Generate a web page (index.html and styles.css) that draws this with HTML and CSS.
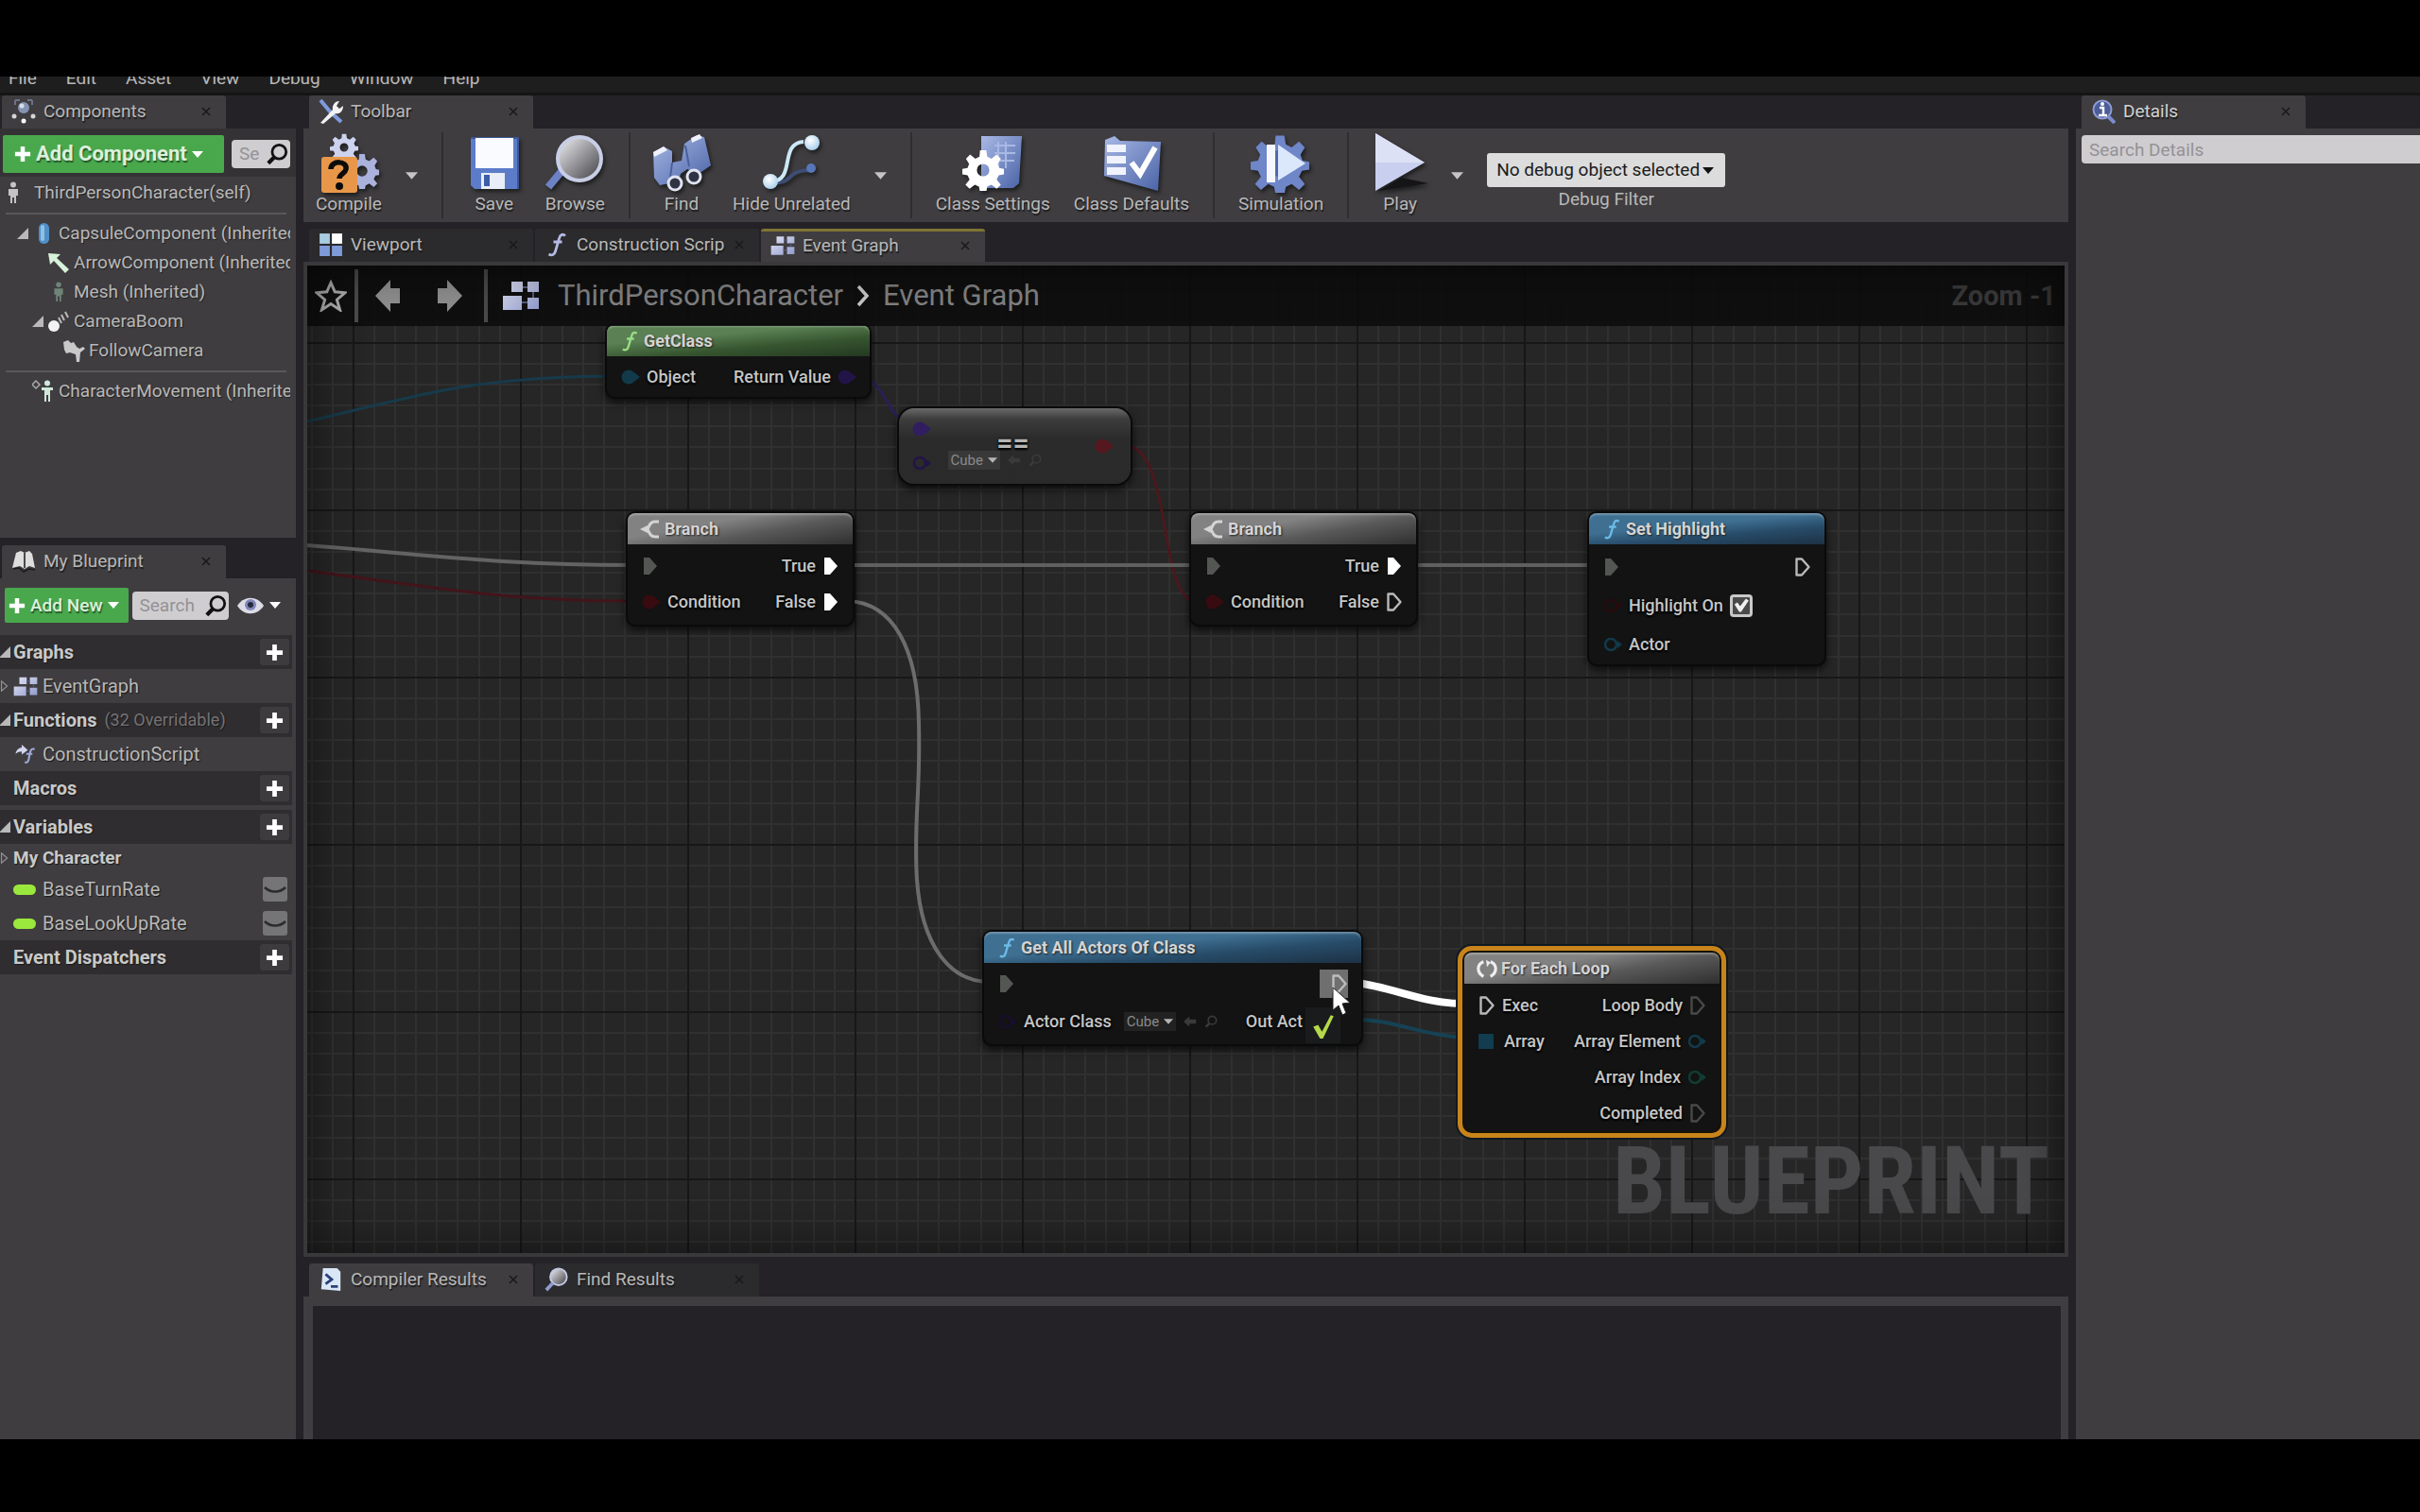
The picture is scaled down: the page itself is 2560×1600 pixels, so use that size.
FILE: index.html
```html
<!DOCTYPE html>
<html lang="en">
<head>
<meta charset="utf-8">
<title>ThirdPersonCharacter - Blueprint Editor</title>
<link rel="stylesheet" href="styles.css">
</head>
<body>
<svg class="defs" aria-hidden="true">
  <defs>
    <linearGradient id="lav" x1="0" y1="0" x2="1" y2="1"><stop offset="0" stop-color="#e4e6f7"/><stop offset="1" stop-color="#8f9acb"/></linearGradient>
    <linearGradient id="blu" x1="0" y1="0" x2="1" y2="1"><stop offset="0" stop-color="#a9b9e6"/><stop offset="1" stop-color="#4a63a6"/></linearGradient>
    <linearGradient id="glassfill" x1="0" y1="0" x2="1" y2="1"><stop offset="0" stop-color="#f4f4f6"/><stop offset=".55" stop-color="#8d8d92"/><stop offset="1" stop-color="#3d3d42"/></linearGradient>
    <radialGradient id="ball" cx=".4" cy=".35" r=".7"><stop offset="0" stop-color="#fff"/><stop offset="1" stop-color="#a5cdec"/></radialGradient>
    <symbol id="i-x" viewBox="0 0 10 10"><path d="M1 1l8 8M9 1L1 9" stroke="#19191a" stroke-width="1.600" fill="none"/></symbol>
    <symbol id="i-caret" viewBox="0 0 14 8"><path d="M0 0h14L7 8z" fill="currentColor"/></symbol>
    <symbol id="i-plus" viewBox="0 0 20 20"><path d="M7.500 1h5v6.500H19v5h-6.500V19h-5v-6.500H1v-5h6.500z" fill="#fff"/></symbol>
    <symbol id="i-open" viewBox="0 0 12 12"><path d="M12 0v12H0z" fill="#b9b9b9"/></symbol>
    <symbol id="i-closed" viewBox="0 0 12 14"><path d="M2 1l7 6-7 6z" fill="none" stroke="#8e8e8e" stroke-width="1.500"/></symbol>
    <symbol id="i-mag" viewBox="0 0 26 26"><circle cx="15.500" cy="10.500" r="8" fill="none" stroke="currentColor" stroke-width="3"/><path d="M10 16.500L3 23.500" stroke="currentColor" stroke-width="4.500"/></symbol>
    <symbol id="i-cells" viewBox="0 0 40 32"><path d="M10 1h12v11H10zM27 1h12v11H27zM27 18h12v12H27zM1 16h20v15H1z" fill="url(#lav)"/><path d="M22 7h5M33 12v6M21 23h6" stroke="#55597a" stroke-width="2"/></symbol>
    <symbol id="i-view" viewBox="0 0 24 24"><path d="M1 1h10v10H1z" fill="#a9cde0"/><path d="M13 1h10v10H13z" fill="#fff"/><path d="M1 13h10v10H1zM13 13h10v10H13z" fill="#7f9ad8"/></symbol>
    <symbol id="i-f" viewBox="0 0 20 26"><path d="M19 3.500C16 1 13.500 2.500 12.500 6.500L8.500 20C7.500 23.500 5 25 1.500 23M6.500 10h9" fill="none" stroke="currentColor" stroke-width="2.800"/></symbol>
    <symbol id="i-gear" viewBox="0 0 40 40"><path fill-rule="evenodd" d="M17 1h6l1 6 4 2 5-4 4 4-3 5 1.500 4L41 19v5l-6 1-2 4 4 5-4 4-5-4-4 2-1 5h-6l-1-5-4-2-5 4-4-4 4-5-2-4-6-1v-5l6-1 1.500-4-3-5 4-4 5 4 4-2zM20 14a6 6 0 100 12 6 6 0 000-12z"/></symbol>
    <symbol id="i-find" viewBox="0 0 28 28"><circle cx="16" cy="11" r="9.500" fill="url(#glassfill)" stroke="#c3c9e6" stroke-width="2"/><path d="M9.500 18L2 26" stroke="#8e9bd0" stroke-width="4"/></symbol>
    <symbol id="i-exec" viewBox="0 0 18 22"><path d="M2 2h6l8 9-8 9H2z" fill="currentColor"/></symbol>
    <symbol id="i-execo" viewBox="0 0 18 22"><path d="M2.500 2.500H8l7.500 8.500L8 19.500H2.500z" fill="none" stroke="currentColor" stroke-width="2.400" stroke-linejoin="round"/></symbol>
    <symbol id="i-pin" viewBox="0 0 20 18"><circle cx="8" cy="9" r="7.500" fill="currentColor"/><path d="M14 4l6 5-6 5z" fill="currentColor"/></symbol>
    <symbol id="i-pino" viewBox="0 0 20 18"><circle cx="8" cy="9" r="6" fill="none" stroke="currentColor" stroke-width="2.500"/><path d="M15 5l5 4-5 4z" fill="currentColor"/></symbol>
    <symbol id="i-branch" viewBox="0 0 22 22"><path d="M20 3h-4C11 3 10 7 8 11c2 4 3 8 8 8h4" fill="none" stroke="#d4d4d4" stroke-width="3"/><path d="M0 11l8-4v8z" fill="#d4d4d4"/></symbol>
    <symbol id="i-assign" viewBox="0 0 18 16"><path d="M0 8l8-7v4h9v6H8v4z" fill="currentColor"/></symbol>
    <symbol id="i-person" viewBox="0 0 14 24"><circle cx="7" cy="3.500" r="3" fill="currentColor"/><path d="M2 8h10v7h-2v8H8v-6H6v6H4v-8H2z" fill="currentColor"/></symbol>
  </defs>
</svg>

<div class="app">
  <nav class="menu">
    <a href="#">File</a><a href="#">Edit</a><a href="#">Asset</a><a href="#">View</a><a href="#">Debug</a><a href="#">Window</a><a href="#">Help</a>
  </nav>

  <div class="work">
    <aside class="col">
      <section class="dock dock-components">
        <div class="tabs">
          <div class="tab tab-active">
            <svg class="tab-icon" viewBox="0 0 26 26"><circle cx="13" cy="9" r="6" fill="#8593b3"/><circle cx="11" cy="7" r="2.500" fill="#d6ddeb"/><path d="M4 1h5M4 1v5M22 1h-5M22 1v5" stroke="#6d7387" stroke-width="2"/><circle cx="3" cy="18" r="2.500" fill="#d5d5d5"/><circle cx="13" cy="23" r="2.500" fill="#fff"/><circle cx="23" cy="18" r="2.500" fill="#d5d5d5"/></svg>
            <button class="tab-name">Components</button>
            <button class="tab-close" aria-label="Close"><svg><use href="#i-x"/></svg></button>
          </div>
        </div>
        <div class="panel panel-components">
          <div class="bar bar-components">
            <button class="green green-lg"><svg class="plus"><use href="#i-plus"/></svg>Add Component<svg class="caret"><use href="#i-caret"/></svg></button>
            <label class="search search-sm"><input type="text" placeholder="Search" aria-label="Search components"><svg class="mag"><use href="#i-mag"/></svg></label>
          </div>
          <div class="row self"><svg class="ic ic-grey"><use href="#i-person"/></svg><span>ThirdPersonCharacter(self)</span></div>
          <hr>
          <div class="row l1"><svg class="exp"><use href="#i-open"/></svg><svg class="ic" viewBox="0 0 24 24"><rect x="7" y="1" width="11" height="22" rx="5.500" fill="#4f8fc6"/><rect x="9" y="3" width="4" height="17" rx="2" fill="#8fc0e4"/></svg><span>CapsuleComponent (Inherited)</span></div>
          <div class="row l2"><i class="exp"></i><svg class="ic" viewBox="0 0 24 24"><path d="M1 2l13 1-4 4 13 12-4 4L7 10l-4 4z" fill="#d7f2d8"/></svg><span>ArrowComponent (Inherited)</span></div>
          <div class="row l2"><i class="exp"></i><svg class="ic ic-mesh"><use href="#i-person"/></svg><span>Mesh (Inherited)</span></div>
          <div class="row l2"><svg class="exp"><use href="#i-open"/></svg><svg class="ic" viewBox="0 0 24 24"><circle cx="7" cy="17" r="6" fill="#f2f2f2"/><path d="M12 8l3 6M15 5l3 6M19 2l3 6" stroke="#b9b9b9" stroke-width="2"/></svg><span>CameraBoom</span></div>
          <div class="row l3"><i class="exp"></i><svg class="ic" viewBox="0 0 24 24"><path d="M1 3l5-2 3 3 3-1 3 5 3 2 4-2 2 2-5 4-1 10h-3l-1-8-6-2-4 1-2-4z" fill="#c9c9c9"/></svg><span>FollowCamera</span></div>
          <hr>
          <div class="row l1"><i class="exp"></i><svg class="ic" viewBox="0 0 24 24"><path d="M4 1l4 4-4 4-4-4z" fill="none" stroke="#aaa" stroke-width="1.500"/><circle cx="16" cy="3.500" r="3" fill="#cfe8da"/><path d="M10 8h12v3h-3v12h-2v-7h-2v7h-2V11h-3z" fill="#cfe8da"/></svg><span>CharacterMovement (Inherited)</span></div>
        </div>
      </section>

      <section class="dock dock-blueprint">
        <div class="tabs">
          <div class="tab tab-active">
            <svg class="tab-icon" viewBox="0 0 26 26"><path d="M1 20L5 4l5-2 4 2 5-2 3 3 3 15-6-2-5 3-5-3z" fill="#dedede"/><path d="M14 4v16M2 21l6-1 5 4 6-3 6 1" stroke="#1b1b1b" stroke-width="1.500" fill="none"/></svg>
            <button class="tab-name">My Blueprint</button>
            <button class="tab-close" aria-label="Close"><svg><use href="#i-x"/></svg></button>
          </div>
        </div>
        <div class="panel">
          <div class="bar bar-blueprint">
            <button class="green"><svg class="plus"><use href="#i-plus"/></svg>Add New<svg class="caret"><use href="#i-caret"/></svg></button>
            <label class="search"><input type="text" placeholder="Search" aria-label="Search blueprint"><svg class="mag"><use href="#i-mag"/></svg></label>
            <button class="eye" aria-label="View options"><svg class="eye-icon" viewBox="0 0 28 20"><path d="M0 10C7-1 21-1 28 10 21 21 7 21 0 10z" fill="#dcdce6"/><circle cx="14" cy="9" r="6" fill="#8085b8"/><circle cx="14" cy="9" r="3" fill="#26283c"/></svg><svg class="caret"><use href="#i-caret"/></svg></button>
          </div>
          <div class="cat"><svg class="exp"><use href="#i-open"/></svg><h2>Graphs</h2><button class="add" aria-label="Add graph"><svg><use href="#i-plus"/></svg></button></div>
          <div class="item"><svg class="exp"><use href="#i-closed"/></svg><svg class="item-icon"><use href="#i-cells"/></svg><span>EventGraph</span></div>
          <div class="cat"><svg class="exp"><use href="#i-open"/></svg><h2>Functions</h2><small>(32 Overridable)</small><button class="add" aria-label="Add function"><svg><use href="#i-plus"/></svg></button></div>
          <div class="item"><i class="exp"></i><svg class="item-icon" viewBox="0 0 26 26"><path d="M0 12C1 6 5 4 8 4V0l8 7-8 6V9C5 9 3 10 0 12z" fill="#d3d6ec"/><path d="M25 6c-3-1-5 0-6 4l-2 10c-1 3-2 4-5 3M14 12h8" stroke="#9fa9da" stroke-width="2.600" fill="none"/></svg><span>ConstructionScript</span></div>
          <div class="cat"><i class="exp"></i><h2>Macros</h2><button class="add" aria-label="Add macro"><svg><use href="#i-plus"/></svg></button></div>
          <div class="cat cat-gap"><svg class="exp"><use href="#i-open"/></svg><h2>Variables</h2><button class="add" aria-label="Add variable"><svg><use href="#i-plus"/></svg></button></div>
          <div class="item item-group"><svg class="exp"><use href="#i-closed"/></svg><h3>My Character</h3></div>
          <div class="item"><i class="exp"></i><i class="pill"></i><span>BaseTurnRate</span><button class="lid" aria-label="Toggle visibility"><svg viewBox="0 0 26 26"><path d="M2 11c6 6 16 6 22 0" fill="none" stroke="#2c2c2c" stroke-width="2.500"/></svg></button></div>
          <div class="item"><i class="exp"></i><i class="pill"></i><span>BaseLookUpRate</span><button class="lid" aria-label="Toggle visibility"><svg viewBox="0 0 26 26"><path d="M2 11c6 6 16 6 22 0" fill="none" stroke="#2c2c2c" stroke-width="2.500"/></svg></button></div>
          <div class="cat"><i class="exp"></i><h2>Event Dispatchers</h2><button class="add" aria-label="Add dispatcher"><svg><use href="#i-plus"/></svg></button></div>
        </div>
      </section>
    </aside>

    <main class="col col-main">
      <section class="dock">
        <div class="tabs">
          <div class="tab tab-active">
            <svg class="tab-icon" viewBox="0 0 26 26"><path d="M2 1l10 12 12 11" stroke="#7e9ade" stroke-width="4" fill="none"/><path d="M2 25L15 11c-1-4 2-9 7-9l-3 5 3 3 4-3c0 6-4 9-8 8L5 26z" fill="#f3f3f3"/></svg>
            <button class="tab-name">Toolbar</button>
            <button class="tab-close" aria-label="Close"><svg><use href="#i-x"/></svg></button>
          </div>
        </div>
        <div class="panel toolbar">
          <button class="tool"><svg viewBox="0 0 64 64"><use href="#i-gear" x="12" y="1" width="30" height="30" fill="#cdd2ee"/><use href="#i-gear" x="27" y="22" width="38" height="38" fill="#aab2dc"/><rect x="3" y="26" width="38" height="38" rx="3" fill="#e8974a"/><path d="M13 39c0-10 18-9 16 0-1 5-7 5-7 10" fill="none" stroke="#0b0b0b" stroke-width="5.500"/><circle cx="22" cy="57" r="4" fill="#0b0b0b"/></svg>Compile</button>
          <button class="drop" aria-label="Compile options"><svg><use href="#i-caret"/></svg></button>
          <i class="sep"></i>
          <button class="tool"><svg viewBox="0 0 64 64"><path d="M7 6h50v54H11l-4-4z" fill="#5c7cc9"/><path d="M7 6h50v54" fill="none" stroke="#3b5694" stroke-width="2"/><path d="M12 6h40v32H12z" fill="#fafbff"/><path d="M18 43h25v17H18z" fill="#e9edf8"/><path d="M21 45h6v12h-6z" fill="#3d5da8"/></svg>Save</button>
          <button class="tool"><svg viewBox="0 0 64 64"><path d="M19 40L4 58" stroke="#6d82c4" stroke-width="8"/><circle cx="37" cy="28" r="23" fill="url(#glassfill)" stroke="#c8cee6" stroke-width="4"/></svg>Browse</button>
          <i class="sep"></i>
          <button class="tool"><svg viewBox="0 0 64 64"><path d="M2 21l11-6 9 5v12l10-2 3-18L48 3l8 2 7 30-13 9-12-5-7 5-2 8-20 4-6-8z" fill="url(#blu)"/><path d="M2 21l11-6 4 4-14 7zM42 6l9-4 3 4-11 5z" fill="#f0f2fb"/><path d="M22 32l-2 16M36 14l4 22" stroke="#49609f" stroke-width="2"/><circle cx="25" cy="54" r="7" fill="#2f3344" stroke="#dfe3f2" stroke-width="3"/><circle cx="45" cy="47" r="7" fill="#2f3344" stroke="#dfe3f2" stroke-width="3"/></svg>Find</button>
          <button class="tool"><svg viewBox="0 0 64 64"><path d="M14 53c20 2 12-13 38-13" fill="none" stroke="#3d4d74" stroke-width="4"/><circle cx="53" cy="38" r="5" fill="#5875b8"/><path d="M10 52c28 0 8-40 35-42" fill="none" stroke="#cbe8f6" stroke-width="4"/><circle cx="10" cy="52" r="8" fill="url(#ball)"/><circle cx="54" cy="11" r="8" fill="url(#ball)"/></svg>Hide Unrelated</button>
          <button class="drop" aria-label="Hide options"><svg><use href="#i-caret"/></svg></button>
          <i class="sep"></i>
          <button class="tool"><svg viewBox="0 0 64 64"><path d="M20 4h43l-3 50-6 5H20z" fill="url(#blu)"/><path d="M34 14h22M34 22h22M34 30h21M38 10v28M46 10v28" stroke="#a9b9e4" stroke-width="2"/><use href="#i-gear" x="0" y="18" width="44" height="44" fill="#fff"/></svg>Class Settings</button>
          <button class="tool"><svg viewBox="0 0 64 64"><path d="M4 8l10-4 6 5 43 1-3 52L3 46z" fill="url(#blu)"/><path d="M6 13h20v8H6zM6 25h20v8H6zM6 37h20v8H6z" fill="#f1f3fc"/><path d="M32 32l9 12 16-28" fill="none" stroke="#fff" stroke-width="6"/></svg>Class Defaults</button>
          <i class="sep"></i>
          <button class="tool"><svg viewBox="0 0 64 64"><use href="#i-gear" x="0" y="2" width="62" height="62" fill="#6f86c8"/><circle cx="31" cy="33" r="14" fill="#5068ac"/><path d="M17 13h9v40h-9z" fill="#f5f7ff"/><path d="M29 13l29 20-29 18z" fill="#dbe7fb"/></svg>Simulation</button>
          <i class="sep"></i>
          <button class="tool"><svg viewBox="0 0 64 64"><path d="M10 62l24-14 28 6z" fill="#151517"/><path d="M6 1l52 31L6 62z" fill="#c9cfee"/><path d="M6 1l52 31H6z" fill="#dde1f6"/></svg>Play</button>
          <button class="drop" aria-label="Play options"><svg><use href="#i-caret"/></svg></button>
          <div class="debug">
            <div class="combo"><select id="dbg"><option>No debug object selected</option></select><svg class="caret"><use href="#i-caret"/></svg></div>
            <label for="dbg">Debug Filter</label>
          </div>
        </div>
      </section>

      <section class="dock dock-graph">
        <div class="tabs">
          <div class="tab"><svg class="tab-icon"><use href="#i-view"/></svg><button class="tab-name">Viewport</button><button class="tab-close" aria-label="Close"><svg><use href="#i-x"/></svg></button></div>
          <div class="tab"><svg class="tab-icon lavender"><use href="#i-f"/></svg><button class="tab-name">Construction Scrip</button><button class="tab-close" aria-label="Close"><svg><use href="#i-x"/></svg></button></div>
          <div class="tab tab-active tab-focus"><svg class="tab-icon"><use href="#i-cells"/></svg><button class="tab-name">Event Graph</button><button class="tab-close" aria-label="Close"><svg><use href="#i-x"/></svg></button></div>
        </div>
        <div class="graph">
          <svg class="wires" aria-hidden="true">
            <g fill="none">
              <path d="M0 165C110 140 170 117 330 117" stroke="#173a4a" stroke-width="3"/>
              <path d="M0 296C120 305 200 317 345 317" stroke="#636363" stroke-width="4"/>
              <path d="M0 323C120 338 200 355 345 355" stroke="#43141a" stroke-width="3"/>
              <path d="M590 119C608 124 612 150 630 166" stroke="#2c1f55" stroke-width="3"/>
              <path d="M868 190C915 200 900 345 938 356" stroke="#4c181d" stroke-width="3"/>
              <path d="M570 317H940M1165 317H1362" stroke="#606060" stroke-width="4"/>
              <path d="M572 355C620 357 646 405 647 485C649 560 641 590 645 650C650 720 680 757 720 758" stroke="#6c6c6c" stroke-width="4"/>
              <path d="M1110 759C1150 764 1180 781 1224 781" stroke="#fff" stroke-width="8"/>
              <path d="M1110 798C1150 798 1180 815 1224 817" stroke="#164254" stroke-width="4"/>
            </g>
          </svg>

          <article class="node n-getclass">
            <header class="head-green"><svg class="fn"><use href="#i-f"/></svg>GetClass</header>
            <div class="ports">
              <div class="port"><svg class="pin c-obj"><use href="#i-pin"/></svg><span>Object</span><span class="out">Return Value</span><svg class="pin c-class"><use href="#i-pin"/></svg></div>
            </div>
          </article>

          <article class="node n-equal">
            <div class="eq-pins"><svg class="pin c-class2"><use href="#i-pin"/></svg><svg class="pin c-class"><use href="#i-pino"/></svg></div>
            <div class="eq-mid"><b>==</b><div class="pick"><button>Cube<svg><use href="#i-caret"/></svg></button><svg class="mini"><use href="#i-assign"/></svg><svg class="mini"><use href="#i-mag"/></svg></div></div>
            <svg class="pin c-bool2"><use href="#i-pin"/></svg>
          </article>

          <article class="node n-branch1">
            <header class="head-grey"><svg class="fn"><use href="#i-branch"/></svg>Branch</header>
            <div class="ports ports-38">
              <div class="port"><svg class="pin exec c-dim"><use href="#i-exec"/></svg><span class="out">True</span><svg class="pin exec"><use href="#i-exec"/></svg></div>
              <div class="port"><svg class="pin c-bool"><use href="#i-pin"/></svg><span>Condition</span><span class="out">False</span><svg class="pin exec"><use href="#i-exec"/></svg></div>
            </div>
          </article>

          <article class="node n-branch2">
            <header class="head-grey"><svg class="fn"><use href="#i-branch"/></svg>Branch</header>
            <div class="ports ports-38">
              <div class="port"><svg class="pin exec c-dim"><use href="#i-exec"/></svg><span class="out">True</span><svg class="pin exec"><use href="#i-exec"/></svg></div>
              <div class="port"><svg class="pin c-bool"><use href="#i-pin"/></svg><span>Condition</span><span class="out">False</span><svg class="pin exec c-open"><use href="#i-execo"/></svg></div>
            </div>
          </article>

          <article class="node n-highlight">
            <header class="head-blue"><svg class="fn"><use href="#i-f"/></svg>Set Highlight</header>
            <div class="ports">
              <div class="port"><svg class="pin exec c-dim"><use href="#i-exec"/></svg><span class="out"></span><svg class="pin exec c-open"><use href="#i-execo"/></svg></div>
              <div class="port"><svg class="pin c-faint"><use href="#i-pino"/></svg><label for="hl">Highlight On</label><input type="checkbox" id="hl" checked></div>
              <div class="port"><svg class="pin c-obj"><use href="#i-pino"/></svg><span>Actor</span></div>
            </div>
          </article>

          <article class="node n-getall">
            <header class="head-blue"><svg class="fn"><use href="#i-f"/></svg>Get All Actors Of Class</header>
            <div class="ports">
              <div class="port"><svg class="pin exec c-dim"><use href="#i-exec"/></svg><span class="out"></span><span class="hover-pin"><svg class="pin exec"><use href="#i-execo"/></svg></span></div>
              <div class="port"><svg class="pin c-class3"><use href="#i-pino"/></svg><span>Actor Class</span><div class="pick"><button>Cube<svg><use href="#i-caret"/></svg></button><svg class="mini"><use href="#i-assign"/></svg><svg class="mini"><use href="#i-mag"/></svg></div><span class="out out-cut">Out Act</span></div>
            </div>
          </article>

          <article class="node n-foreach">
            <header class="head-grey"><svg class="fn" viewBox="0 0 24 22"><path d="M8 3C0 6 0 16 8 20M16 3c8 3 8 13 0 17" fill="none" stroke="#eee" stroke-width="3.500"/><path d="M11 1l5 3-4 5z" fill="#eee"/></svg>For Each Loop</header>
            <div class="ports ports-38">
              <div class="port"><svg class="pin exec c-open"><use href="#i-execo"/></svg><span>Exec</span><span class="out">Loop Body</span><svg class="pin exec c-shut"><use href="#i-execo"/></svg></div>
              <div class="port"><svg class="pin c-arr" viewBox="0 0 20 18"><rect x="0" y="1" width="16" height="16" fill="currentColor"/></svg><span>Array</span><span class="out">Array Element</span><svg class="pin c-obj"><use href="#i-pino"/></svg></div>
              <div class="port"><span class="out">Array Index</span><svg class="pin c-int"><use href="#i-pino"/></svg></div>
              <div class="port"><span class="out">Completed</span><svg class="pin exec c-shut"><use href="#i-execo"/></svg></div>
            </div>
          </article>

          <span class="ok"><svg viewBox="0 0 36 38"><path d="M8 20l5-2 4 7L26 8l3 1-11 23h-3z" fill="#b4d84a"/></svg></span>
          <svg class="cursor" viewBox="0 0 20 32"><path d="M1 1v24l6-5 4 10 4-2-4-10 8-1z" fill="#fff" stroke="#222" stroke-width="1"/></svg>

          <div class="crumbs">
            <button class="icon-btn star" aria-label="Bookmark"><svg viewBox="0 0 32 32"><path d="M16 3l4 9 10 1-8 7 3 10-9-6-9 6 3-10-8-7 10-1z" fill="none" stroke="#aeaeae" stroke-width="2.800"/></svg></button>
            <i class="bar-sep"></i>
            <button class="icon-btn" aria-label="Back"><svg viewBox="0 0 28 36"><path d="M1 18L17 1v9h10v16H17v9z" fill="#8f8f8f"/></svg></button>
            <button class="icon-btn fwd" aria-label="Forward"><svg viewBox="0 0 28 36"><path d="M27 18L11 1v9H1v16h10v9z" fill="#8f8f8f"/></svg></button>
            <i class="bar-sep"></i>
            <svg class="crumb-icon"><use href="#i-cells"/></svg>
            <a href="#">ThirdPersonCharacter</a>
            <svg class="chev" viewBox="0 0 14 24"><path d="M2 2l9 10-9 10" fill="none" stroke="#c9c9c9" stroke-width="3.500"/></svg>
            <a href="#">Event Graph</a>
            <span class="zoom">Zoom -1</span>
          </div>
          <div class="mark">BLUEPRINT</div>
        </div>
      </section>

      <section class="dock dock-results">
        <div class="tabs">
          <div class="tab tab-active"><svg class="tab-icon" viewBox="0 0 26 28"><path d="M4 1h16l4 4v22L2 25z" fill="#d9e6f6"/><path d="M7 8l7 6-7 5M13 22h8" stroke="#2b3f78" stroke-width="3" fill="none"/></svg><button class="tab-name">Compiler Results</button><button class="tab-close" aria-label="Close"><svg><use href="#i-x"/></svg></button></div>
          <div class="tab"><svg class="tab-icon"><use href="#i-find"/></svg><button class="tab-name">Find Results</button><button class="tab-close" aria-label="Close"><svg><use href="#i-x"/></svg></button></div>
        </div>
        <div class="panel results"><div class="log"></div></div>
      </section>
    </main>

    <aside class="col">
      <section class="dock dock-details">
        <div class="tabs">
          <div class="tab tab-active tab-lit"><svg class="tab-icon" viewBox="0 0 26 26"><circle cx="12" cy="11" r="9.500" fill="#4b5c96" stroke="#8d9bd4" stroke-width="2"/><path d="M18 18l7 7" stroke="#7b8cd0" stroke-width="4"/><path d="M9 9h4v8M8 17h9" stroke="#fff" stroke-width="2.500" fill="none"/><circle cx="12" cy="5" r="2" fill="#fff"/></svg><button class="tab-name">Details</button><button class="tab-close" aria-label="Close"><svg><use href="#i-x"/></svg></button></div>
        </div>
        <div class="panel panel-details"><input class="details-search" type="text" placeholder="Search Details" aria-label="Search Details"></div>
      </section>
    </aside>
  </div>
</div>
</body>
</html>
```
FILE: styles.css
```css
* { box-sizing: border-box; }

body {
  margin: 0;
  background: #000;
  color: #b8b8b8;
  font: 19px/24px Roboto, "Liberation Sans", sans-serif;
}

button, input, select { font: inherit; color: inherit; }
button { padding: 0; border: 0; background: none; text-align: left; }
a { color: inherit; text-decoration: none; }
h2, h3 { margin: 0; font-size: 20px; font-weight: 700; }
h3 { font-size: 19px; }
.defs { position: absolute; width: 0; height: 0; }
svg { display: block; flex: none; }

/* Frame */
.app {
  display: flex;
  flex-direction: column;
  min-height: 100vh;
  padding: 81px 0 77px;
}
.menu {
  display: flex;
  align-items: flex-end;
  gap: 31px;
  height: 20px;
  padding: 0 9px 3px;
  overflow: hidden;
  background: #1e1e1f;
  border-bottom: 3px solid #151515;
}
.work {
  flex: 1;
  display: grid;
  grid-template-columns: 313px minmax(0, 1fr) 364px;
  gap: 8px;
  background: #242227;
}
.col { display: flex; flex-direction: column; gap: 8px; min-width: 0; }
.col-main { gap: 7px; }
.dock { display: flex; flex-direction: column; min-width: 0; }
.dock-components { flex: 468 1 0; }
.dock-blueprint { flex: 946 1 0; }
.dock-graph { flex: 1088 1 0; }
.dock-results { flex: 186 1 0; }
.dock-details { flex: 1; }
.panel { flex: 1; background: #3f3d40; }

/* Tabs */
.tabs { display: flex; gap: 2px; padding-left: 6px; }
.col:first-child .tabs { padding-left: 2px; }
.tab {
  display: flex;
  align-items: center;
  width: 237px;
  height: 35px;
  padding: 0 16px 2px 10px;
  background: #2b2a2c;
  border-radius: 3px 3px 0 0;
}
.tab-active { background: #3f3d40; }
.tab-focus { border-top: 3px solid #7e7434; }
.tab-lit { color: #d2d2d2; }
.tab-icon { width: 26px; height: 26px; margin-right: 8px; }
.tab-name { flex: 1; overflow: hidden; white-space: nowrap; text-shadow: 1px 2px 1px #1c1c1c; }
.tab-close { margin-left: 8px; }
.tab-close svg { width: 10px; height: 10px; }
.lavender { color: #b4bae4; }

/* Side panels */
.bar { display: flex; align-items: center; }
.bar-components { gap: 8px; padding: 7px 6px 4px 3px; background: #343235; }
.bar-blueprint { gap: 4px; padding: 10px 4px 13px 5px; }
.green {
  display: flex;
  align-items: center;
  gap: 5px;
  height: 37px;
  padding: 0 10px 0 4px;
  border-radius: 2px;
  background: #4aa84c;
  color: #dcf0dc;
  font-weight: 500;
  text-shadow: 1px 2px 1px #24592a;
}
.green-lg { width: 234px; height: 40px; padding: 0 12px; font-size: 22px; font-weight: 700; }
.plus { width: 18px; height: 18px; }
.caret { width: 12px; height: 7px; color: #fff; }
.search {
  display: flex;
  flex: 1;
  align-items: center;
  min-width: 0;
  height: 30px;
  padding: 0 2px 0 8px;
  border-radius: 4px;
  background: #cfcdd0;
  color: #111;
}
.search input { flex: 1; width: 0; min-width: 0; padding: 0; border: 0; outline: 0; background: none; }
.search .mag { width: 24px; height: 24px; }
.search-sm input { margin-right: 6px; }
.bar-blueprint .search { flex: 0 0 102px; }
::placeholder { color: #949296; opacity: 1; }
.eye { display: flex; align-items: center; gap: 6px; padding-left: 5px; }
.eye-icon { width: 28px; height: 20px; }

.panel-components { overflow: hidden; }
.row {
  display: flex;
  align-items: center;
  height: 31px;
  margin-right: 6px;
  overflow: hidden;
  white-space: nowrap;
  text-shadow: 1px 1px 1px #222;
}
.exp { flex: none; width: 14px; height: 12px; }
.ic { width: 24px; height: 24px; margin-right: 4px; }
.row .exp { width: 16px; margin-right: 2px; }
.l1 { padding-left: 16px; }
.l2 { padding-left: 32px; }
.l3 { padding-left: 48px; }
.self { height: 34px; padding-left: 2px; }
.self .ic { margin-right: 10px; }
.ic-grey { color: #c4c4c4; }
.ic-mesh { color: #6f8578; height: 22px; }
hr { margin: 4px 10px 4px 6px; border: 0; border-top: 2px solid #59585a; }
hr ~ hr { margin-top: 6px; }

.cat, .item { display: flex; align-items: center; height: 36px; margin-right: 4px; text-shadow: 1px 1px 1px #1a1a1a; }
.cat { padding-right: 3px; background: #2f2d30; color: #c9c9c9; }
.item { font-size: 20px; }
.cat .exp, .item .exp { margin-left: -1px; width: 12px; margin-right: 3px; }
.cat-gap { margin-top: 5px; }
.cat small { margin-left: 8px; color: #757375; font-size: 18px; }
.add { display: grid; place-items: center; width: 31px; height: 28px; margin-left: auto; border-radius: 3px; background: #3d3b3e; }
.add svg { width: 19px; height: 19px; }
.item-group { height: 30px; color: #c9c9c9; }
.item-icon { width: 26px; height: 21px; margin-right: 5px; }
.pill { width: 24px; height: 11px; margin-right: 7px; border-radius: 6px; background: #9be83c; }
.lid { width: 26px; height: 26px; margin: 0 5px 0 auto; border-radius: 3px; background: #757476; }

/* Toolbar */
.toolbar { display: flex; align-items: flex-start; gap: 25px; height: 99px; padding: 4px 13px; }
.tool {
  display: flex;
  flex-direction: column;
  align-items: center;
  min-width: 58px;
  white-space: nowrap;
  text-shadow: 1px 2px 1px #1c1c1c;
}
.tool svg { width: 64px; height: 64px; margin: 0 -3px; filter: drop-shadow(2px 3px 2px #1e1e1e); }
.drop { align-self: center; width: 13px; color: #c5c5c5; }
.drop svg { width: 13px; height: 8px; }
.sep { width: 2px; height: 91px; background: #2e2d2f; }
.debug { display: flex; flex-direction: column; align-items: center; padding-top: 22px; gap: 1px; }
.combo { display: grid; align-items: center; width: 252px; height: 36px; border-radius: 3px; background: #dcdcdc; color: #1b1b1b; }
.combo > * { grid-area: 1 / 1; }
.combo select { appearance: none; width: 100%; height: 36px; padding: 0 10px; border: 0; background: none; }
.combo .caret { justify-self: end; margin-right: 12px; color: #111; pointer-events: none; }

/* Graph */
.graph {
  position: relative;
  flex: 1;
  overflow: hidden;
  border: 4px solid #39383a;
  background-color: #262626;
  background-image:
    linear-gradient(90deg, #171717 2px, transparent 2px),
    linear-gradient(#171717 2px, transparent 2px),
    repeating-linear-gradient(90deg, transparent 0 22px, #303031 22px 24px, transparent 24px 44px, #303031 44px 46px, transparent 46px 66px, #303031 66px 68px, transparent 68px 88px, #303031 88px 90px, transparent 90px 110px, #303031 110px 112px, transparent 112px 133px, #303031 133px 135px, transparent 135px 155px, #303031 155px 157px, transparent 157px 177px),
    repeating-linear-gradient(transparent 0 22px, #303031 22px 24px, transparent 24px 44px, #303031 44px 46px, transparent 46px 66px, #303031 66px 68px, transparent 68px 88px, #303031 88px 90px, transparent 90px 110px, #303031 110px 112px, transparent 112px 133px, #303031 133px 135px, transparent 135px 155px, #303031 155px 157px, transparent 157px 177px);
  background-size: 177px 177px;
  background-position: 48px 81px;
}
.graph::after {
  content: "";
  position: absolute;
  inset: 0;
  box-shadow: inset 0 0 50px #0009;
  pointer-events: none;
}
.wires { position: absolute; inset: 0; width: 100%; height: 100%; }

.crumbs {
  position: absolute;
  inset: 0 0 auto 0;
  display: flex;
  align-items: center;
  height: 64px;
  padding: 0 9px 0 8px;
  background: #0c0c0ddd;
  color: #828282;
  font-size: 31px;
  line-height: 36px;
}
.icon-btn svg { width: 28px; height: 36px; }
.icon-btn { margin: 0 19px 0 17px; }
.icon-btn.star { margin: 0 8px 0 0; }
.star svg { width: 34px; height: 34px; }
.fwd { margin: 0 22px 0 19px; }
.bar-sep { width: 4px; height: 56px; background: #4a4a4a; }
.crumb-icon { width: 40px; height: 32px; margin: 0 19px 0 15px; }
.chev { width: 14px; height: 24px; margin: 0 14px; }
.zoom { margin-left: auto; color: #39393a; font-size: 29px; font-weight: 700; }
.mark {
  position: absolute;
  right: 16px;
  bottom: 24px;
  color: #49484a;
  font: 700 100px/104px "Roboto Condensed", Roboto, "Liberation Sans", sans-serif;
}

/* Nodes on the canvas */
.node {
  position: absolute;
  border-radius: 8px;
  background: #121312;
  box-shadow: 0 0 0 2px #0a0a0a, 0 4px 9px 2px #000a;
  color: #c6c6c6;
  font-size: 18px;
  font-weight: 500;
  text-shadow: 0 0 3px #000, 0 2px 2px #000;
}
.node header {
  display: flex;
  align-items: center;
  gap: 4px;
  height: 33px;
  padding-left: 13px;
  border-radius: 8px 8px 0 0;
  color: #d4d4d4;
  font-weight: 700;
  text-shadow: 1px 1px 2px #222;
  box-shadow: inset 0 3px 2px -1px #fff4;
}
.head-green { background: linear-gradient(175deg, #5a8053 0 35%, #36552f 65%, #243822); }
.head-grey { background: linear-gradient(170deg, #828282 0 35%, #595959 60%, #2f2f2f); }
.head-blue { background: linear-gradient(175deg, #3f6f91 0 40%, #274c69 65%, #1d3144); }
.fn { width: 22px; height: 22px; }
.head-green .fn { color: #98dc84; }
.head-blue .fn { color: #6bbbe6; }
.ports { padding: 2px 14px 0 15px; }
.port { display: flex; align-items: center; gap: 7px; height: 40px; white-space: nowrap; }
.ports-38 { padding-top: 4px; }
.ports-38 .port { height: 38px; }
.out { margin-left: auto; }
.out-cut { margin-right: 48px; }
.pin { width: 20px; height: 18px; }
.exec { width: 18px; height: 22px; color: #fff; }
.c-dim { color: #545654; margin-right: 2px; }
.c-open { color: #b9b9b9; }
.c-shut { color: #484a48; }
.c-obj { color: #123a4a; }
.c-arr { color: #123c50; }
.c-int { color: #123c34; }
.c-class { color: #221447; }
.c-class2 { color: #301e60; }
.c-class3 { color: #180e2c; }
.c-bool { color: #380b11; }
.c-bool2 { color: #55181e; }
.c-faint { color: #260b0e; }
.pick { display: flex; align-items: center; gap: 8px; color: #3a3a3a; font-size: 15px; line-height: 20px; font-weight: 400; }
.pick button { display: flex; align-items: center; gap: 5px; padding: 0 3px; background: #fff1; color: #8a8a8a; }
.pick button svg { width: 10px; height: 6px; color: #b5b5b5; }
.mini { width: 14px; height: 14px; }
.port .pick { margin-left: 6px; }
input[type="checkbox"] {
  appearance: none;
  width: 24px;
  height: 24px;
  margin: 0;
  border: 3px solid #c9c9c9;
  border-radius: 4px;
  background: #4a4a4a;
}
input[type="checkbox"]:checked::after {
  content: "";
  display: block;
  height: 18px;
  background: #f0f0f0;
  clip-path: polygon(2px 8px, 5px 6px, 8px 10px, 14px 2px, 17px 4px, 9px 16px, 7px 16px);
}

.n-getclass { left: 317px; top: 63px; width: 278px; height: 76px; }
.n-getclass .ports { padding-top: 2px; }
.n-equal {
  left: 626px;
  top: 151px;
  width: 245px;
  height: 80px;
  display: flex;
  align-items: center;
  justify-content: space-between;
  padding: 0 18px 0 14px;
  border-radius: 16px;
  background: linear-gradient(#6a6a6a 0, #3d3d3d 14%, #2b2b2b 40%, #2a2a2a);
}
.eq-pins { display: grid; gap: 18px; }
.eq-mid { display: grid; width: 138px; padding-top: 14px; }
.eq-mid b { justify-self: center; font-size: 30px; line-height: 16px; color: #b5b5b5; }
.n-branch1, .n-branch2 { width: 238px; height: 118px; top: 262px; }
.n-branch1 { left: 339px; }
.n-branch2 { left: 935px; }
.n-highlight { left: 1356px; top: 262px; width: 249px; height: 160px; }
.n-highlight .ports { padding-top: 3px; }
.n-highlight .port { height: 41px; }
.n-getall { left: 716px; top: 705px; width: 399px; height: 119px; }
.n-foreach { left: 1224px; top: 727px; width: 270px; height: 189px; box-shadow: 0 0 0 2px #16120a, 0 0 0 7px #c8841a, 0 0 0 9px #101820; }
.hover-pin { display: grid; place-items: center end; width: 30px; height: 30px; background: #6f6f6f; }
.hover-pin .pin { color: #bdbdbd; }
.ok { position: absolute; left: 1056px; top: 785px; width: 37px; height: 38px; background: #1a1b1c; }
.cursor { position: absolute; left: 1084px; top: 763px; width: 20px; height: 32px; }

/* Results and details */
.results { display: flex; padding: 10px 8px 0 10px; }
.log { flex: 1; background: #242226; }
.panel-details { padding: 7px 0 0 6px; }
.details-search {
  width: 100%;
  height: 30px;
  padding: 0 8px;
  border: 0;
  border-radius: 4px 0 0 4px;
  background: #cfcdd0;
}
```
